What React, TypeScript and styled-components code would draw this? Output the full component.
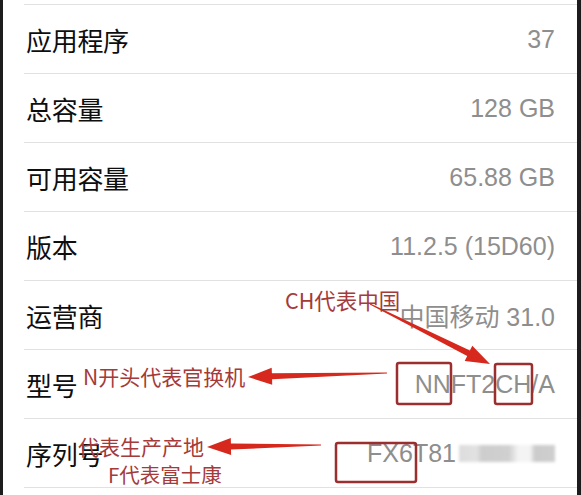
import React from "react";
import styled, { createGlobalStyle } from "styled-components";

const GlobalStyle = createGlobalStyle`
  html, body {
    margin: 0;
    padding: 0;
    background: #ffffff;
  }
`;

const Page = styled.div`
  position: relative;
  width: 581px;
  height: 495px;
  overflow: hidden;
`;

const Frame = styled.div`
  box-sizing: border-box;
  width: 581px;
  height: 495px;
  border-left: 3px solid #1c1c1c;
  border-right: 4px solid #1c1c1c;
  padding-top: 4px;
  background: #ffffff;
  display: flex;
  flex-direction: column;
`;

const Row = styled.div`
  flex: 0 0 auto;
  box-sizing: border-box;
  height: 69px;
  margin-left: 21px;
  padding: 0 22px 0 2px;
  border-top: 1px solid #e1e1e1;
  display: flex;
  align-items: center;
  justify-content: space-between;
`;

const Label = styled.span`
  font-family: "Noto Sans CJK SC", sans-serif;
  font-size: 26px;
  color: #0e0e0e;
  letter-spacing: -0.3px;
`;

const Value = styled.span`
  display: flex;
  align-items: center;
  font-family: "Liberation Sans", "Noto Sans CJK SC", sans-serif;
  font-size: 25px;
  color: #8e8e8e;
`;

const Blurred = styled.span`
  display: inline-block;
  width: 96px;
  height: 17px;
  margin-left: 3px;
  background: linear-gradient(
    90deg,
    #dcdcdc 0%,
    #e2e2e2 18%,
    #cdcdcd 24%,
    #d0d0d0 52%,
    #f4f4f4 62%,
    #f4f4f4 74%,
    #cbcbcb 79%,
    #cfcfcf 100%
  );
  filter: blur(1.5px);
`;

const Overlay = styled.div`
  position: absolute;
  inset: 0;
  pointer-events: none;
`;

const Note = styled.span<{ $x: number; $y: number; $size: number }>`
  position: absolute;
  left: ${(p) => p.$x}px;
  top: ${(p) => p.$y}px;
  font-family: "Noto Sans CJK SC", sans-serif;
  font-size: ${(p) => p.$size}px;
  line-height: 1;
  color: #a53a3a;
  white-space: nowrap;
`;

const Marks = styled.svg`
  position: absolute;
  left: 0;
  top: 0;
`;

type Pt = [number, number];

// tapered arrow: thin tail, wider shaft near the head, pointed tip
function arrowPoints(tail: Pt, tip: Pt, headLen: number, headHalf: number, tailW: number, neckW: number) {
  const dx = tip[0] - tail[0];
  const dy = tip[1] - tail[1];
  const len = Math.hypot(dx, dy);
  const ux = dx / len;
  const uy = dy / len;
  const nx = -uy;
  const ny = ux;
  const bx = tip[0] - ux * headLen;
  const by = tip[1] - uy * headLen;
  const p = (x: number, y: number, off: number) => `${(x + nx * off).toFixed(1)},${(y + ny * off).toFixed(1)}`;
  return [
    p(tail[0], tail[1], tailW / 2),
    p(bx, by, neckW / 2),
    p(bx, by, headHalf),
    `${tip[0]},${tip[1]}`,
    p(bx, by, -headHalf),
    p(bx, by, -neckW / 2),
    p(tail[0], tail[1], -tailW / 2),
  ].join(" ");
}

const rows = [
  { label: "应用程序", value: "37" },
  { label: "总容量", value: "128 GB" },
  { label: "可用容量", value: "65.88 GB" },
  { label: "版本", value: "11.2.5 (15D60)" },
  { label: "运营商", value: "中国移动 31.0" },
  { label: "型号", value: "NNFT2CH/A" },
];

const arrows: { tail: Pt; tip: Pt }[] = [
  { tail: [370, 304], tip: [490, 364] },
  { tail: [387, 373], tip: [248, 377] },
  { tail: [321, 445], tip: [207, 447] },
];

const boxes = [
  { x: 397, y: 363, w: 54, h: 41 },
  { x: 495, y: 364, w: 37, h: 40 },
  { x: 336, y: 443, w: 80, h: 39 },
];

export default function App() {
  return (
    <Page>
      <GlobalStyle />
      <Frame>
        {rows.map((r) => (
          <Row key={r.label}>
            <Label>{r.label}</Label>
            <Value>{r.value}</Value>
          </Row>
        ))}
        <Row>
          <Label>序列号</Label>
          <Value>
            FX6T81
            <Blurred />
          </Value>
        </Row>
        <Row />
      </Frame>

      <Overlay>
        <Marks width={581} height={495} viewBox="0 0 581 495">
          {arrows.map((a, i) => (
            <polygon key={i} points={arrowPoints(a.tail, a.tip, 24, 8.5, 1, 6)} fill="#d6281d" />
          ))}
          {boxes.map((b, i) => (
            <rect
              key={i}
              x={b.x}
              y={b.y}
              width={b.w}
              height={b.h}
              rx={2}
              fill="none"
              stroke="#9b2f2f"
              strokeWidth={2.5}
            />
          ))}
        </Marks>
        <Note $x={285} $y={289} $size={21.5}>CH代表中国</Note>
        <Note $x={83} $y={366} $size={21}>N开头代表官换机</Note>
        <Note $x={78} $y={436} $size={21}>代表生产产地</Note>
        <Note $x={108} $y={464} $size={20.5}>F代表富士康</Note>
      </Overlay>
    </Page>
  );
}
